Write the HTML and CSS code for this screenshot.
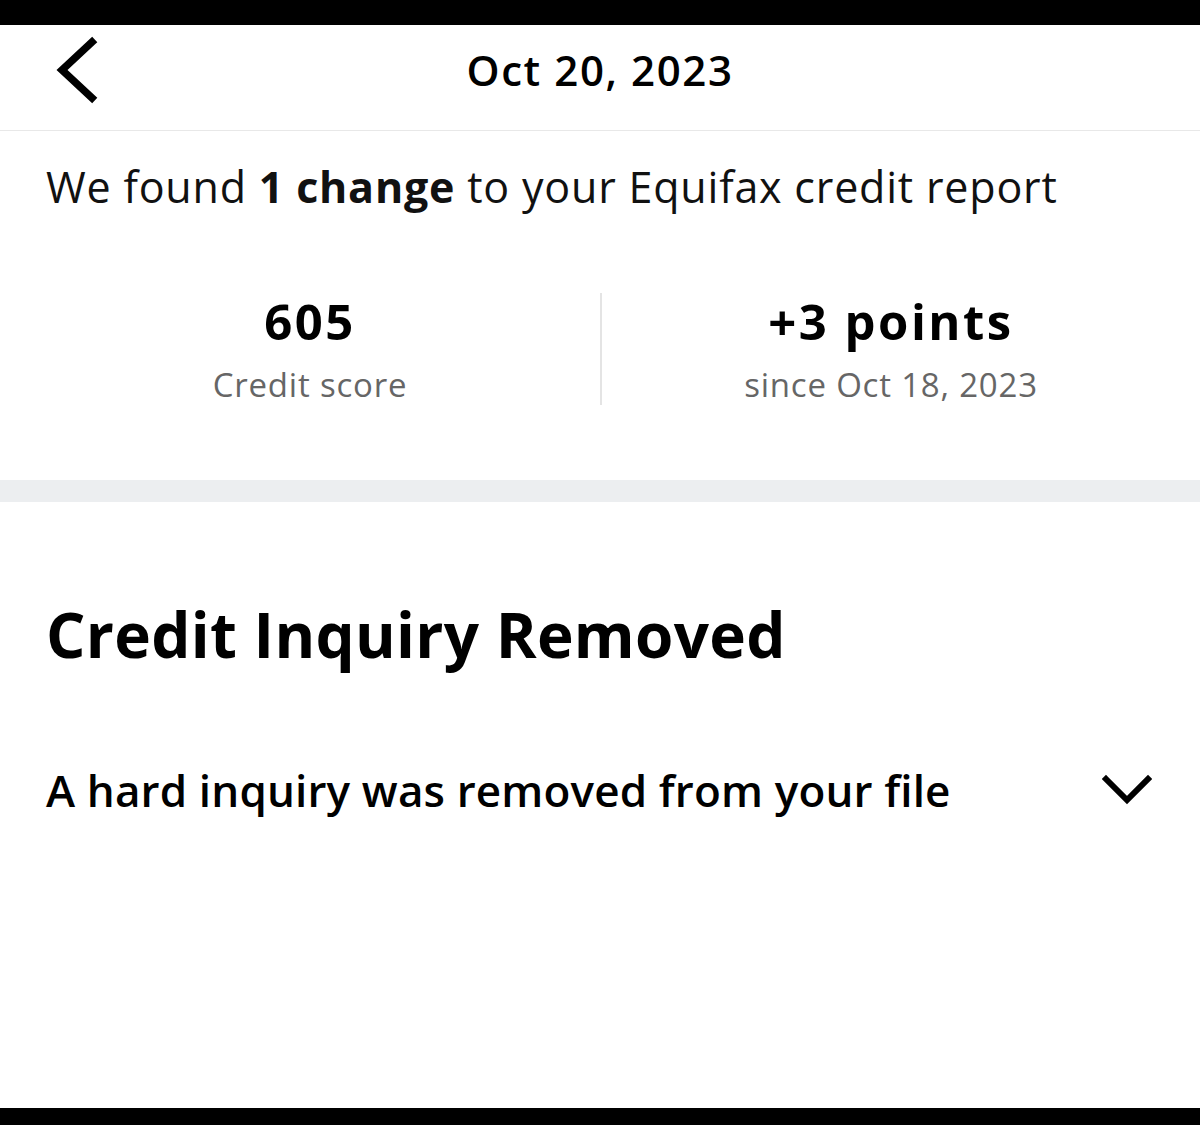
FILE: index.html
```html
<!DOCTYPE html>
<html lang="en">
<head>
    <meta charset="UTF-8">
    <title>Oct 20, 2023</title>
    <link rel="stylesheet" href="styles.css">
</head>
<body>
    <div class="screen">
        <div class="status-bar"></div>

        <div class="nav-bar">
            <button class="back-btn">
                <svg width="46" height="70" viewBox="0 0 46 70"><path d="M40 7 L10 35 L40 63" fill="none" stroke="#000" stroke-width="7.5" stroke-linecap="square"/></svg>
            </button>
            <div class="nav-title">Oct 20, 2023</div>
        </div>

        <div class="summary">
            <p class="summary-text">We found <b>1 change</b> to your Equifax credit report</p>

            <div class="stats">
                <div class="stat">
                    <div class="stat-value">605</div>
                    <div class="stat-label">Credit score</div>
                </div>
                <div class="stat">
                    <div class="stat-value">+3 points</div>
                    <div class="stat-label">since Oct 18, 2023</div>
                </div>
            </div>
        </div>

        <div class="spacer-band"></div>

        <div class="change">
            <h2 class="change-title">Credit Inquiry Removed</h2>
            <div class="change-row">
                <span>A hard inquiry was removed from your file</span>
                <svg width="50" height="34" viewBox="0 0 50 34"><path d="M4 6 L25 27 L46 6" fill="none" stroke="#000" stroke-width="6" stroke-linecap="square"/></svg>
            </div>
        </div>

        <div class="home-bar"></div>
    </div>
</body>
</html>
```

FILE: styles.css
```css
body {
    margin: 0;
    font-family: "Open Sans", "Liberation Sans", sans-serif;
    color: #000;
    background: #fff;
}

.screen {
    height: 1125px;
    display: flex;
    flex-direction: column;
}

.status-bar {
    height: 25px;
    background: #000;
}

.nav-bar {
    height: 105px;
    border-bottom: 1px solid #e8e8e8;
    display: flex;
    align-items: center;
    position: relative;
}

.back-btn {
    background: transparent;
    border: none;
    padding: 0;
    margin: 0 0 16px 52px;
    display: flex;
    cursor: pointer;
}

.nav-title {
    position: absolute;
    left: 0;
    right: 0;
    top: 13px;
    text-align: center;
    font-size: 42px;
    font-weight: 600;
    letter-spacing: 1.6px;
    line-height: 64px;
    pointer-events: none;
}

.summary {
    padding: 0 46px;
}

.summary-text {
    margin: 28px 0 0;
    font-size: 43px;
    line-height: 56px;
    font-weight: 400;
    letter-spacing: 0.8px;
    color: #111;
}

.summary-text b {
    font-weight: 700;
}

.stats {
    display: grid;
    grid-template-columns: 1fr 1fr;
    margin: 78px -26px 0;
    height: 112px;
    padding-bottom: 75px;
}

.stat {
    text-align: center;
}

.stat + .stat {
    border-left: 2px solid #e4e4e4;
}

.stat-value {
    font-size: 49px;
    font-weight: 700;
    line-height: 56px;
    letter-spacing: 2.5px;
}

.stat-label {
    margin-top: 16px;
    font-size: 33px;
    line-height: 40px;
    letter-spacing: 0.8px;
    color: #666;
}

.spacer-band {
    height: 22px;
    background: #eceef0;
}

.change {
    flex: 1;
    padding: 0 46px;
}

.change-title {
    margin: 92px 0 0;
    font-size: 62px;
    line-height: 80px;
    font-weight: 700;
    letter-spacing: 0.3px;
}

.change-row {
    margin-top: 86px;
    display: flex;
    justify-content: space-between;
    align-items: center;
    font-size: 44px;
    line-height: 60px;
    font-weight: 600;
    letter-spacing: 0.15px;
}

.change-row svg {
    margin-right: 2px;
}

.home-bar {
    height: 17px;
    background: #000;
}
```
